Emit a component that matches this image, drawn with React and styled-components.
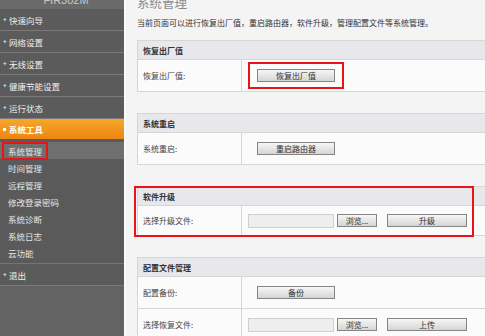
import React from 'react';
import styled, { createGlobalStyle } from 'styled-components';

const Global = createGlobalStyle`
	html, body {
		margin: 0;
		padding: 0;
		background: #f4f4f4;
	}
	body {
		font-family: "Noto Sans CJK SC", "Liberation Sans", sans-serif;
		font-size: 8px;
		color: #333;
	}
`;

const Page = styled.div`
	display: flex;
	width: 485px;
	height: 336px;
	overflow: hidden;
`;

const Sidebar = styled.nav`
	width: 124px;
	flex-shrink: 0;
	display: flex;
	flex-direction: column;
	background: #616161;
	border-right: 2px solid #fafafa;
	color: #eeeeee;
`;

const Brand = styled.div`
	height: 9px;
	overflow: hidden;
	background: #6a6a6a;
	color: #c9c9c9;
	font-family: "Liberation Sans", sans-serif;
	font-size: 11px;
	text-align: center;
	span {
		display: block;
		line-height: 10px;
		margin-top: -5px;
		padding-left: 8px;
	}
`;

const MenuItem = styled.div`
	display: flex;
	align-items: center;
	height: 21px;
	padding-left: 3px;
	background: #5b5b5b;
	border-bottom: 1px solid #7a7a7a;
	font-size: 8.5px;
	&::before {
		content: '+';
		font-size: 6px;
		font-weight: bold;
		width: 6px;
	}
`;

const ActiveItem = styled.div`
	display: flex;
	align-items: center;
	height: 20px;
	padding-left: 3px;
	background: linear-gradient(#f7a72a, #ec8612);
	color: #fff;
	font-weight: bold;
	font-size: 8.5px;
	&::before {
		content: '';
		width: 3px;
		height: 3px;
		background: #fff;
		margin-right: 3px;
	}
`;

const SubMenu = styled.div`
	display: flex;
	flex-direction: column;
	padding: 3px 0 2px;
	background: #5a5a5a;
	border-bottom: 1px solid #757575;
`;

const SubItem = styled.div`
	display: flex;
	align-items: center;
	height: 17px;
	padding-left: ${p => (p.current ? '2px' : '8px')};
	background: ${p => (p.current ? '#6f6f6f' : 'transparent')};
	font-size: 8.5px;
	color: #e6e6e6;
`;

const Marked = styled.span`
	display: flex;
	align-items: center;
	height: 14px;
	padding: 0 4px;
	border: 2px solid #e8141a;
`;

const Rest = styled.div`
	flex: 1;
	background: #636363;
`;

const Content = styled.main`
	flex: 1;
	overflow: hidden;
	padding-left: 11px;
	background: #f4f4f4;
`;

const Title = styled.h1`
	margin: -3px 0 0;
	font-size: 12.5px;
	line-height: 12px;
	font-weight: normal;
	color: #8a8a8a;
	white-space: nowrap;
`;

const Intro = styled.p`
	margin: 9px 0 12px;
	line-height: 10px;
	white-space: nowrap;
	color: #333;
`;

const Section = styled.section`
	position: relative;
	width: 380px;
	border: 1px solid #d6d6d6;
	border-right: none;
	margin-bottom: 21px;
	background: #fbfbfb;
`;

const SectionHead = styled.div`
	display: flex;
	align-items: center;
	height: 18px;
	padding-left: 5px;
	background: #e8e8ec;
	border-bottom: 1px solid #d6d6d6;
	font-weight: bold;
	color: #333;
`;

const Row = styled.div`
	display: grid;
	grid-template-columns: 104px 1fr;
	height: ${p => p.h || 31}px;
	border-top: ${p => (p.first ? 'none' : '1px solid #d6d6d6')};
`;

const Label = styled.div`
	display: flex;
	align-items: center;
	padding-left: 5px;
	border-right: 1px solid #d6d6d6;
	color: #444;
`;

const Cell = styled.div`
	display: flex;
	align-items: center;
	padding-left: 6px;
`;

const Button = styled.button`
	box-sizing: border-box;
	width: ${p => p.w || 78}px;
	height: 13px;
	margin-left: ${p => p.ml || 0}px;
	padding: 0;
	border: 1px solid #858585;
	background: linear-gradient(#f6f6f6, #d5d5d5);
	font-family: inherit;
	font-size: 8px;
	line-height: 11px;
	color: #333;
`;

const FileInput = styled.div`
	box-sizing: border-box;
	width: 86px;
	height: 14px;
	background: #eeeeee;
	border: 1px solid #d0d0d0;
	margin-right: 3px;
`;

const Callout = styled.div`
	display: flex;
	align-items: center;
	padding: 5px 7px;
	border: 2px solid #e8141a;
`;

const Highlight = styled.div`
	position: absolute;
	left: -4px;
	top: -1px;
	bottom: -2px;
	width: 336px;
	border: 2px solid #e8141a;
	pointer-events: none;
`;

const topMenu = ['快速向导', '网络设置', '无线设置', '健康节能设置', '运行状态'];
const subMenu = ['系统管理', '时间管理', '远程管理', '修改登录密码', '系统诊断', '系统日志', '云功能'];

const FileRow = ({ label, action, first, h }) => (
	<Row first={first} h={h}>
		<Label>{label}</Label>
		<Cell>
			<FileInput />
			<Button w={40}>浏览...</Button>
			<Button ml={10} w={80}>{action}</Button>
		</Cell>
	</Row>
);

const App = () => (
	<>
		<Global />
		<Page>
			<Sidebar>
				<Brand>
					<span>FIR302M</span>
				</Brand>
				{topMenu.map(m => (
					<MenuItem key={m}>{m}</MenuItem>
				))}
				<ActiveItem>系统工具</ActiveItem>
				<SubMenu>
					{subMenu.map((m, i) => (
						<SubItem key={m} current={i === 0}>
							{i === 0 ? <Marked>{m}</Marked> : m}
						</SubItem>
					))}
				</SubMenu>
				<MenuItem>退出</MenuItem>
				<Rest />
			</Sidebar>
			<Content>
				<Title>系统管理</Title>
				<Intro>当前页面可以进行恢复出厂值，重启路由器，软件升级，管理配置文件等系统管理。</Intro>

				<Section>
					<SectionHead>恢复出厂值</SectionHead>
					<Row first>
						<Label>恢复出厂值:</Label>
						<Cell>
							<Callout>
								<Button>恢复出厂值</Button>
							</Callout>
						</Cell>
					</Row>
				</Section>

				<Section>
					<SectionHead>系统重启</SectionHead>
					<Row first>
						<Label>系统重启:</Label>
						<Cell>
							<Button ml={9}>重启路由器</Button>
						</Cell>
					</Row>
				</Section>

				<Section>
					<Highlight />
					<SectionHead>软件升级</SectionHead>
					<FileRow first h={29} label="选择升级文件:" action="升级" />
				</Section>

				<Section>
					<SectionHead>配置文件管理</SectionHead>
					<Row first>
						<Label>配置备份:</Label>
						<Cell>
							<Button ml={9}>备份</Button>
						</Cell>
					</Row>
					<FileRow label="选择恢复文件:" action="上传" />
				</Section>
			</Content>
		</Page>
	</>
);

export default App;
